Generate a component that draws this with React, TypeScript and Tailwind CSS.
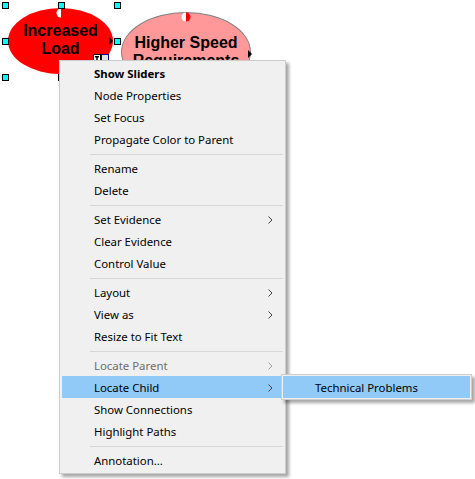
import React from "react";

type Item =
  | { type: "sep" }
  | { type: "item"; label: string; bold?: boolean; disabled?: boolean; sub?: boolean; active?: boolean };

const items: Item[] = [
  { type: "item", label: "Show Sliders", bold: true },
  { type: "item", label: "Node Properties" },
  { type: "item", label: "Set Focus" },
  { type: "item", label: "Propagate Color to Parent" },
  { type: "sep" },
  { type: "item", label: "Rename" },
  { type: "item", label: "Delete" },
  { type: "sep" },
  { type: "item", label: "Set Evidence", sub: true },
  { type: "item", label: "Clear Evidence" },
  { type: "item", label: "Control Value" },
  { type: "sep" },
  { type: "item", label: "Layout", sub: true },
  { type: "item", label: "View as", sub: true },
  { type: "item", label: "Resize to Fit Text" },
  { type: "sep" },
  { type: "item", label: "Locate Parent", sub: true, disabled: true },
  { type: "item", label: "Locate Child", sub: true, active: true },
  { type: "item", label: "Show Connections" },
  { type: "item", label: "Highlight Paths" },
  { type: "sep" },
  { type: "item", label: "Annotation..." },
];

function Chevron({ color }: { color: string }) {
  return (
    <svg width="5" height="8" viewBox="0 0 5 8" className="block">
      <path d="M0.5 0.5 L4 4 L0.5 7.5" fill="none" stroke={color} strokeWidth="1" />
    </svg>
  );
}

function Handle({ x, y }: { x: number; y: number }) {
  return (
    <div
      className="absolute w-[7px] h-[7px] border border-[#000] bg-[#00ffff]"
      style={{ left: x - 3, top: y - 3 }}
    />
  );
}

function Indicator({ x, y }: { x: number; y: number }) {
  return (
    <svg className="absolute" style={{ left: x - 5, top: y - 5 }} width="10" height="10" viewBox="0 0 10 10">
      <path d="M5 0.5 A4.5 4.5 0 0 0 5 9.5 Z" fill="#ffffff" />
      <path d="M5 0.5 A4.5 4.5 0 0 1 5 9.5 Z" fill="#ff0000" />
    </svg>
  );
}

function Arrow({ x, y }: { x: number; y: number }) {
  return (
    <svg className="absolute" style={{ left: x, top: y }} width="5" height="8" viewBox="0 0 5 8">
      <path d="M0 0 L4 4 L0 8 Z" fill="#000" />
    </svg>
  );
}

export default function App() {
  return (
    <div className="relative w-[475px] h-[479px] bg-white overflow-hidden">
      {/* Pink node */}
      <div className="absolute left-[121px] top-[12px] w-[130px] h-[80px] rounded-[50%] bg-[#ff9999] border border-[#808080] flex flex-col items-center justify-center text-center font-['Liberation_Sans',Arial,sans-serif] font-bold text-[16px] leading-[18px] text-black">
        <div>Higher Speed</div>
        <div>Requirements</div>
      </div>
      <Indicator x={186} y={17} />
      <Arrow x={248} y={50} />

      {/* Red node */}
      <div className="absolute left-[8px] top-[8px] w-[105px] h-[66px] rounded-[50%] bg-[#ff0000] flex flex-col items-center justify-center pb-[2px] text-center font-['Liberation_Sans',Arial,sans-serif] font-bold text-[16px] leading-[18px] text-black">
        <div>Increased</div>
        <div>Load</div>
      </div>
      <Indicator x={61} y={13} />
      <Arrow x={109} y={37} />

      {/* tiny icons */}
      <svg className="absolute left-[93px] top-[54px]" width="17" height="8" viewBox="0 0 17 8">
        <rect x="0.5" y="0.5" width="7" height="7" fill="#fff" stroke="#000" />
        <rect x="2" y="2" width="4" height="1.5" fill="#000" />
        <rect x="3.25" y="2" width="1.5" height="4.5" fill="#000" />
        <rect x="8.5" y="0.5" width="7" height="7" fill="#e0e0e0" stroke="#000080" />
      </svg>

      <Handle x={5} y={5} />
      <Handle x={61} y={5} />
      <Handle x={117} y={5} />
      <Handle x={5} y={41} />
      <Handle x={117} y={41} />
      <Handle x={5} y={77} />
      <Handle x={61} y={77} />
      <Handle x={117} y={77} />

      {/* Context menu */}
      <div className="absolute left-[59px] top-[60px] w-[227px] border border-[#cccccc] bg-[#f0f0f0] pt-[1px] pb-[2px] shadow-[3px_3px_3px_rgba(0,0,0,0.35)] font-['Noto_Sans',sans-serif] text-[11.4px] text-black">
        {items.map((it, i) =>
          it.type === "sep" ? (
            <div key={i} className="pt-[4px] pb-[2px] pl-[30px] pr-[2px]">
              <div className="h-[1px] bg-[#d7d7d7]" />
            </div>
          ) : (
            <div
              key={i}
              className={
                "mx-[2px] h-[22px] flex items-center pt-[1px] pl-[32px] pr-[10px] " +
                (it.active ? "bg-[#91c9f7] " : "") +
                (it.disabled ? "text-[#6d6d6d] " : "") +
                (it.bold ? "font-bold" : "")
              }
            >
              <span className="flex-1 whitespace-nowrap">{it.label}</span>
              {it.sub && <Chevron color={it.disabled ? "#a0a0a0" : "#404040"} />}
            </div>
          )
        )}
      </div>

      {/* Submenu */}
      <div className="absolute left-[281px] top-[374px] w-[191px] border border-[#cccccc] bg-[#f0f0f0] p-[1px] shadow-[3px_3px_3px_rgba(0,0,0,0.35)] font-['Noto_Sans',sans-serif] text-[11.4px] text-black">
        <div className="h-[22px] flex items-center pt-[1px] pl-[32px] bg-[#91c9f7] whitespace-nowrap">Technical Problems</div>
      </div>
    </div>
  );
}
